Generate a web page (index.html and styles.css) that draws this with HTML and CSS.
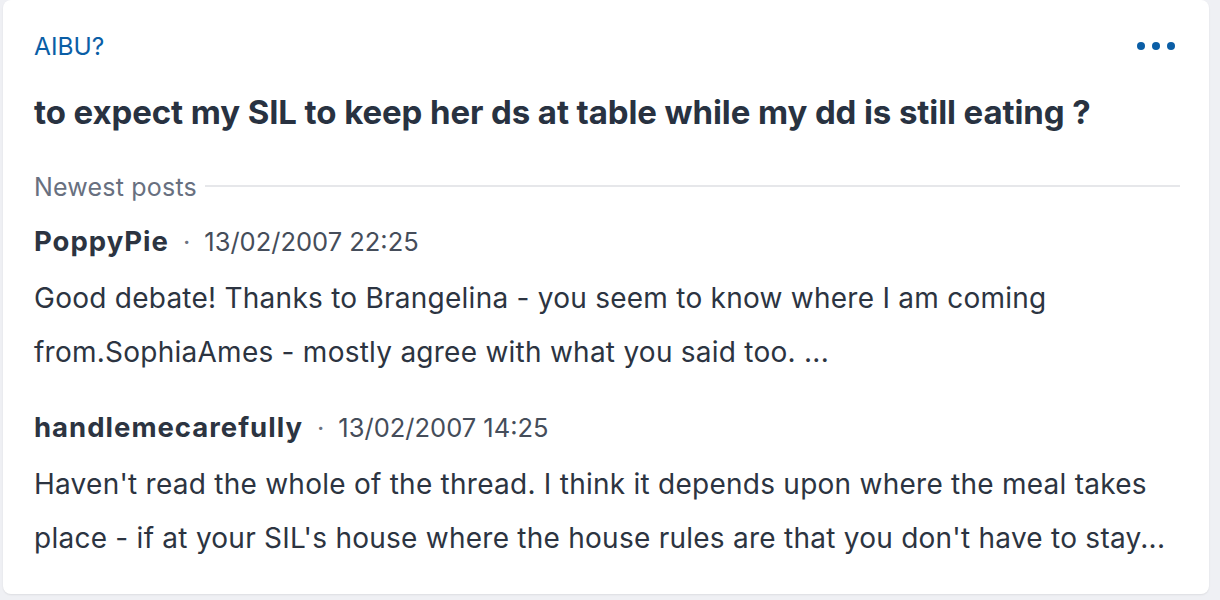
FILE: index.html
```html
<!DOCTYPE html>
<html>
<head>
<meta charset="utf-8">
<link rel="stylesheet" href="styles.css">
</head>
<body>
<div class="page">
  <article class="card">
    <header class="card-head">
      <a class="topic" href="#">AIBU?</a>
      <button class="more" aria-label="More">
        <span class="dot"></span><span class="dot"></span><span class="dot"></span>
      </button>
    </header>
    <h2 class="title">to expect my SIL to keep her ds at table while my dd is still eating ?</h2>
    <div class="section-label"><span>Newest posts</span><span class="rule"></span></div>
    <div class="post">
      <div class="meta"><span class="author">PoppyPie</span><span class="sep">·</span><span class="date">13/02/2007 22:25</span></div>
      <p class="excerpt">Good debate! Thanks to Brangelina - you seem to know where I am coming from.SophiaAmes - mostly agree with what you said too. ...</p>
    </div>
    <div class="post">
      <div class="meta"><span class="author">handlemecarefully</span><span class="sep">·</span><span class="date">13/02/2007 14:25</span></div>
      <p class="excerpt">Haven't read the whole of the thread. I think it depends upon where the meal takes place - if at your SIL's house where the house rules are that you don't have to stay...</p>
    </div>
  </article>
</div>
</body>
</html>
```
FILE: styles.css
```css
html, body {
  margin: 0;
  padding: 0;
  background: #eff0f4;
}
body {
  font-family: Inter, "Noto Sans", "Liberation Sans", sans-serif;
  color: #2c3441;
}
.page {
  padding: 0 11px 6px 3px;
}
.card {
  background: #fff;
  border-radius: 8px;
  box-shadow: 0 1px 2px rgba(0,0,0,0.08);
  padding: 30px 29px 0 31px;
  height: 594px;
  box-sizing: border-box;
}
.card-head {
  display: flex;
  justify-content: space-between;
  align-items: center;
  height: 32px;
}
.topic {
  color: #0a5ea6;
  text-decoration: none;
  font-size: 24.5px;
  line-height: 32px;
}
.more {
  border: 0;
  background: none;
  padding: 0;
  margin-right: 5px;
  display: flex;
  gap: 7px;
}
.dot {
  width: 8px;
  height: 8px;
  border-radius: 50%;
  background: #0a5ea6;
}
.title {
  margin: 30px 0 0;
  font-size: 33px;
  font-weight: 700;
  line-height: 40px;
  letter-spacing: -0.1px;
  color: #283241;
}
.section-label {
  margin-top: 40px;
  display: flex;
  align-items: center;
  gap: 8px;
  font-size: 25px;
  line-height: 30px;
  letter-spacing: 0.2px;
  color: #687080;
}
.rule {
  flex: 1;
  height: 2px;
  margin-top: -3px;
  background: #e6e7ea;
}
.post {
  margin-top: 21px;
}
.post + .post {
  margin-top: 30px;
}
.meta {
  display: flex;
  align-items: baseline;
  font-size: 25.5px;
  line-height: 36px;
}
.author {
  font-weight: 700;
  font-size: 27.5px;
  letter-spacing: 1px;
  color: #2c3441;
}
.sep {
  margin: 0 14px;
  color: #6b7280;
}
.date {
  color: #454d5a;
}
.excerpt {
  margin: 11px 0 0;
  font-size: 28px;
  line-height: 54px;
  letter-spacing: 0.25px;
  color: #2c3441;
}
```
